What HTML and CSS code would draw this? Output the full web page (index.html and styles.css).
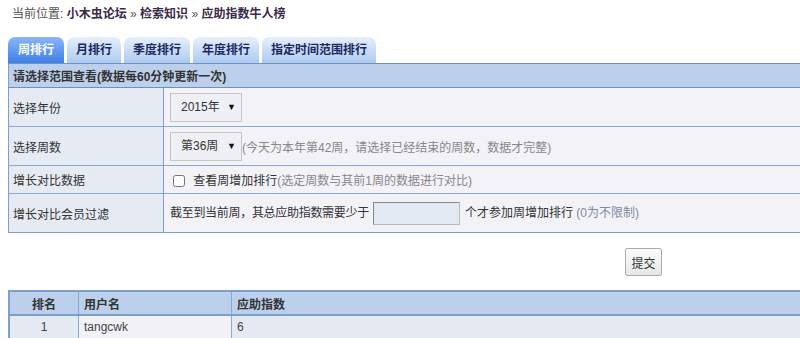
FILE: index.html
```html
<!DOCTYPE html>
<html lang="zh-CN">
<head>
  <meta charset="UTF-8">
  <title>应助指数牛人榜</title>
  <link rel="stylesheet" href="styles.css">
</head>
<body>
  <div class="page">
    <div class="crumb">
      当前位置: <a href="#">小木虫论坛</a> » <a href="#">检索知识</a> » <a href="#">应助指数牛人榜</a>
    </div>

    <div class="tabs">
      <a href="#" class="tab active">周排行</a>
      <a href="#" class="tab">月排行</a>
      <a href="#" class="tab">季度排行</a>
      <a href="#" class="tab">年度排行</a>
      <a href="#" class="tab">指定时间范围排行</a>
    </div>

    <table class="form-table">
      <tr class="head">
        <th colspan="2">请选择范围查看(数据每60分钟更新一次)</th>
      </tr>
      <tr class="row-tall">
        <td class="label">选择年份</td>
        <td><span class="fake-select">2015年 <i>▼</i></span></td>
      </tr>
      <tr class="row-mid">
        <td class="label">选择周数</td>
        <td><span class="fake-select">第36周 <i>▼</i></span><span class="hint">(今天为本年第42周，请选择已经结束的周数，数据才完整)</span></td>
      </tr>
      <tr class="row-short">
        <td class="label">增长对比数据</td>
        <td><label class="check"><input type="checkbox"> 查看周增加排行</label><span class="hint">(选定周数与其前1周的数据进行对比)</span></td>
      </tr>
      <tr class="row-tall">
        <td class="label">增长对比会员过滤</td>
        <td><span class="tight">截至到当前周，其总应助指数需要少于</span><input type="text" class="num-input">个才参加周增加排行 <span class="hint-blue">(0为不限制)</span></td>
      </tr>
    </table>

    <div class="submit-bar">
      <button class="submit">提交</button>
    </div>

    <table class="rank-table">
      <tr>
        <th class="c-rank">排名</th>
        <th class="c-user">用户名</th>
        <th>应助指数</th>
      </tr>
      <tr>
        <td class="c-rank">1</td>
        <td class="c-user">tangcwk</td>
        <td>6</td>
      </tr>
    </table>
  </div>
</body>
</html>
```

FILE: styles.css
```css
html {
  overflow: hidden;
}
body {
  margin: 0;
  font-family: "Liberation Sans", "Noto Sans CJK SC", sans-serif;
  font-size: 12px;
  color: #333;
  background: #fff;
}
.page {
  width: 1271px;
  margin-left: 8px;
}
.crumb {
  padding: 6px 0 0 4px;
  height: 17px;
  line-height: 17px;
  color: #555;
}
.crumb a {
  color: #3b2a48;
  font-weight: bold;
  text-decoration: none;
}
.tabs {
  display: flex;
  gap: 3px;
  margin-top: 14px;
  height: 26px;
  align-items: flex-end;
}
.tab {
  display: block;
  height: 26px;
  line-height: 26px;
  padding: 0 9px;
  border-radius: 7px 7px 0 0;
  background: linear-gradient(#e6f0fc, #aecaf0);
  color: #1a2962;
  font-weight: bold;
  text-decoration: none;
  font-size: 12px;
}
.tab.active {
  background: linear-gradient(#8bb5f7, #3f7fe8);
  color: #fff;
  padding: 0 10px;
}
.form-table {
  width: 100%;
  border-collapse: collapse;
  border: 1px solid #7c9fcb;
}
.form-table th {
  text-align: left;
  background: #bcd0ec;
  height: 23px;
  padding: 0 0 0 4px;
  border-top: 1px solid #6a92c4;
  border-bottom: 1px solid #6a92c4;
  color: #333;
}
.form-table td {
  border-top: 1px solid #8aaad2;
  background: #f2f2f7;
  padding: 0 0 0 6px;
  vertical-align: middle;
}
.form-table td.label {
  width: 150px;
  background: #e6ebf3;
  border-right: 1px solid #7c9fcb;
  padding-left: 4px;
}
.row-tall td {
  height: 38px;
}
.row-mid td {
  height: 38px;
}
.row-short td {
  height: 27px;
}
.fake-select {
  display: inline-block;
  width: 60px;
  height: 27px;
  line-height: 27px;
  padding-left: 10px;
  border: 1px solid #c6c6c6;
  background: #eef0f5;
  color: #333;
  position: relative;
  vertical-align: middle;
  font-size: 12px;
}
.fake-select i {
  font-style: normal;
  font-size: 9px;
  position: absolute;
  right: 5px;
  top: 0;
  color: #111;
}
.hint {
  color: #888;
  vertical-align: middle;
}
.hint-blue {
  color: #7f8ba2;
}
.tight {
  letter-spacing: -0.3px;
}
.check {
  color: #333;
  vertical-align: middle;
}
.check input {
  margin: 0 5px 0 3px;
  width: 12px;
  height: 12px;
  vertical-align: -2px;
}
.num-input {
  width: 85px;
  height: 21px;
  border: 1px solid #bbb;
  border-top-color: #888;
  border-left-color: #888;
  background: #e3e9f2;
  vertical-align: middle;
  margin: 0 5px 0 4px;
  padding: 0;
}
.submit-bar {
  display: flex;
  justify-content: center;
  padding: 15px 0 14px;
}
.submit {
  width: 37px;
  height: 28px;
  padding: 0;
  font-family: inherit;
  font-size: 12px;
  color: #333;
  background: linear-gradient(#fdfdfd, #e4e6ea);
  border: 1px solid #aaa;
  border-radius: 2px;
}
.rank-table {
  width: 100%;
  border-collapse: collapse;
  border: 2px solid #7c9fcb;
}
.rank-table th,
.rank-table td {
  border: 1px solid #8aaad2;
  text-align: left;
  padding: 0 0 0 5px;
  height: 22px;
}
.rank-table th {
  background: #bcd0ec;
  border-bottom: 2px solid #7c9fcb;
}
.rank-table td {
  background: #e4e9f2;
  color: #444;
}
.rank-table .c-rank {
  width: 68px;
  text-align: center;
  padding: 0;
}
.rank-table .c-user {
  width: 147px;
}
.rank-table td.c-user {
  background: #f2f2f6;
}
```
